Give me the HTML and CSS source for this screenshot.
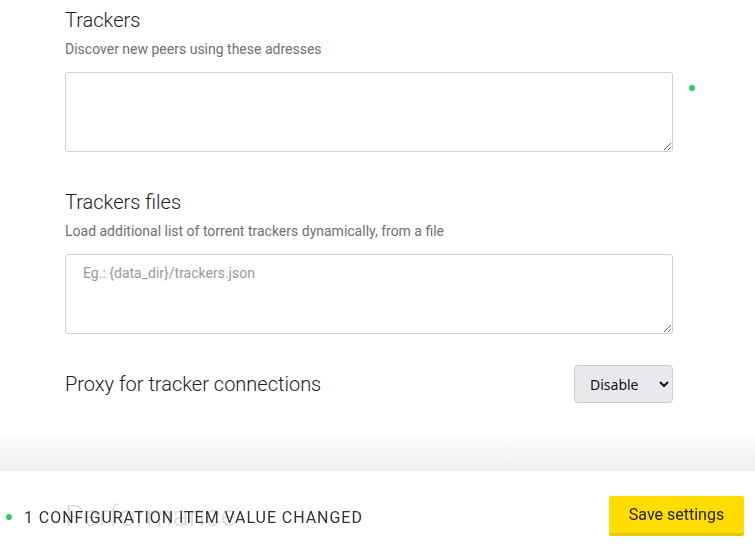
FILE: index.html
```html
<!DOCTYPE html>
<html>
<head>
<meta charset="utf-8">
<link rel="stylesheet" href="styles.css">
</head>
<body>
<main class="content">
  <section class="setting">
    <h2 class="setting-title">Trackers</h2>
    <p class="setting-desc">Discover new peers using these adresses</p>
    <div class="field-row">
      <textarea class="field"></textarea>
      <span class="status-dot field-dot"></span>
    </div>
  </section>
  <section class="setting setting-files">
    <h2 class="setting-title">Trackers files</h2>
    <p class="setting-desc">Load additional list of torrent trackers dynamically, from a file</p>
    <div class="field-row">
      <textarea class="field" placeholder="Eg.: {data_dir}/trackers.json"></textarea>
    </div>
  </section>
  <section class="setting-inline">
    <h2 class="setting-title">Proxy for tracker connections</h2>
    <select class="select">
      <option>Disable</option>
    </select>
  </section>
  <h1 class="group-title">Performance</h1>
</main>
<div class="footer-fade"></div>
<footer class="footer">
  <div class="changes">
    <span class="status-dot"></span>
    <span class="changes-text">1 configuration item value changed</span>
  </div>
  <button class="save-btn">Save settings</button>
</footer>
</body>
</html>
```
FILE: styles.css
```css
html, body {
  margin: 0;
  padding: 0;
  background: #fff;
  font-family: Roboto, "Liberation Sans", sans-serif;
  color: #222;
  overflow: hidden;
}

.content {
  width: 608px;
  padding: 8px 0 0 65px;
}

.setting-title {
  margin: 0;
  font-size: 20px;
  line-height: 24px;
  font-weight: 300;
  color: #1c1c1c;
}

.setting-desc {
  margin: 7px 0 0;
  font-size: 14px;
  line-height: 20px;
  color: #707070;
}

.field-row {
  position: relative;
  margin-top: 13px;
}

.setting-files {
  margin-top: 38px;
}

.setting-files .field-row {
  margin-top: 13px;
}

.field {
  display: block;
  box-sizing: border-box;
  width: 608px;
  height: 80px;
  margin: 0;
  padding: 8px 17px;
  border: 1px solid #cfcfcf;
  border-radius: 3px;
  font-family: Roboto, "Liberation Sans", sans-serif;
  font-size: 14px;
  line-height: 20px;
  color: #222;
  background: #fff;
  outline: none;
}

.field::placeholder {
  color: #9a9a9a;
}

.status-dot {
  display: inline-block;
  width: 6px;
  height: 6px;
  border-radius: 50%;
  background: #2ecc71;
}

.field-dot {
  position: absolute;
  top: 13px;
  left: 624px;
}

.setting-inline {
  display: flex;
  align-items: center;
  justify-content: space-between;
  margin-top: 31px;
}

.select {
  box-sizing: border-box;
  width: 99px;
  height: 38px;
  padding: 0 8px 0 11px;
  border: 1px solid #cbcbcb;
  border-radius: 4px;
  background-color: #e9e9ed;
  font-family: "Noto Sans", "Open Sans", sans-serif;
  font-size: 14px;
  color: #111;
}

.group-title {
  margin: 95px 0 0;
  font-size: 30px;
  line-height: 36px;
  font-weight: 300;
  color: #222;
}

.footer-fade {
  position: fixed;
  left: 0;
  right: 0;
  bottom: 80px;
  height: 40px;
  background: linear-gradient(to bottom, rgba(240,240,240,0), rgba(237,237,237,0.9));
}

.footer {
  position: fixed;
  left: 0;
  right: 0;
  bottom: 0;
  height: 80px;
  box-sizing: border-box;
  display: flex;
  align-items: center;
  justify-content: space-between;
  padding: 0 11px 0 6px;
  background: rgba(255,255,255,0.84);
}

.changes {
  display: flex;
  align-items: center;
  gap: 12px;
  margin-top: 12px;
}

.changes-text {
  font-size: 16px;
  letter-spacing: 0.95px;
  text-transform: uppercase;
  color: #333;
}

.save-btn {
  width: 135px;
  height: 40px;
  margin-top: 10px;
  border: none;
  border-bottom: 3px solid #e8c600;
  border-radius: 2px;
  background: #ffdd00;
  font-family: Roboto, "Liberation Sans", sans-serif;
  font-size: 16px;
  color: #222;
  padding: 0;
  cursor: pointer;
}
```
